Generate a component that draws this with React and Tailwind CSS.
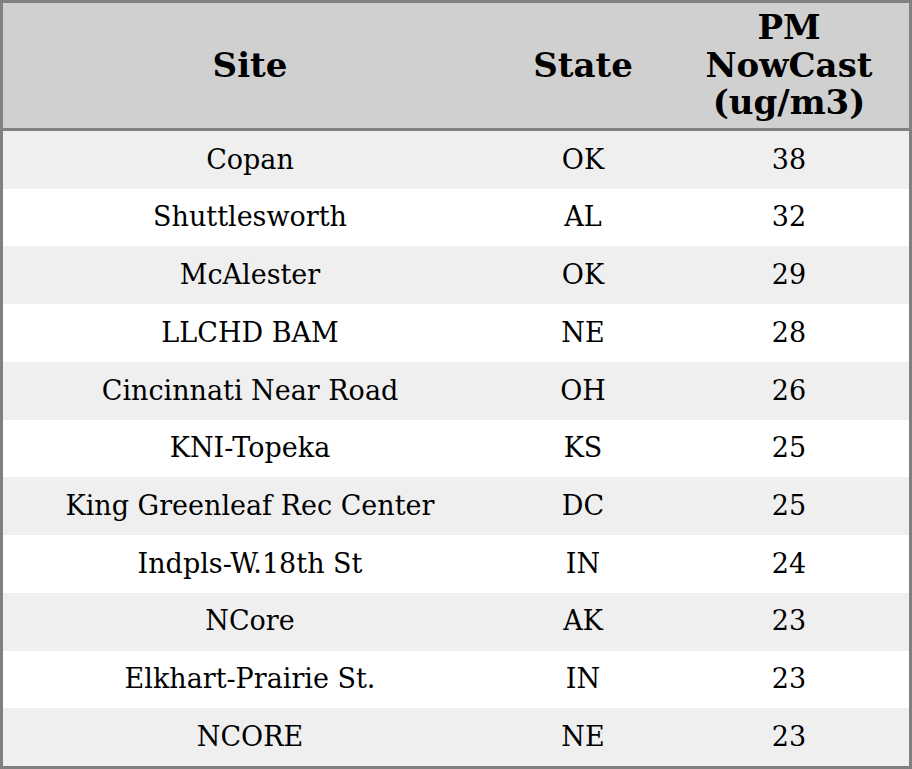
import React from 'react';

const rows = [
    { site: 'Copan', state: 'OK', pm: 38 },
    { site: 'Shuttlesworth', state: 'AL', pm: 32 },
    { site: 'McAlester', state: 'OK', pm: 29 },
    { site: 'LLCHD BAM', state: 'NE', pm: 28 },
    { site: 'Cincinnati Near Road', state: 'OH', pm: 26 },
    { site: 'KNI-Topeka', state: 'KS', pm: 25 },
    { site: 'King Greenleaf Rec Center', state: 'DC', pm: 25 },
    { site: 'Indpls-W.18th St', state: 'IN', pm: 24 },
    { site: 'NCore', state: 'AK', pm: 23 },
    { site: 'Elkhart-Prairie St.', state: 'IN', pm: 23 },
    { site: 'NCORE', state: 'NE', pm: 23 },
];

const App = () => {
    return (
        <div className="w-[912px] h-[769px] bg-white font-['DejaVu_Serif',serif] text-black">
            <div className="h-full border-[3px] border-[#808080] flex flex-col">
                {/* header */}
                <div className="h-[128px] shrink-0 bg-[#d0d0d0] border-b-[3px] border-[#808080] flex items-center font-bold text-[34px] leading-[37.5px]">
                    <div className="w-[494px] text-center">Site</div>
                    <div className="w-[172px] text-center">State</div>
                    <div className="flex-1 text-center">PM<br />NowCast<br />(ug/m3)</div>
                </div>

                {rows.map((row, i) => (
                    <div
                        key={i}
                        className={`flex-1 flex items-center text-[27px] ${i % 2 === 0 ? 'bg-[#efefef]' : 'bg-white'}`}
                    >
                        <div className="w-[494px] text-center">{row.site}</div>
                        <div className="w-[172px] text-center">{row.state}</div>
                        <div className="flex-1 text-center">{row.pm}</div>
                    </div>
                ))}
            </div>
        </div>
    );
};

export default App;
